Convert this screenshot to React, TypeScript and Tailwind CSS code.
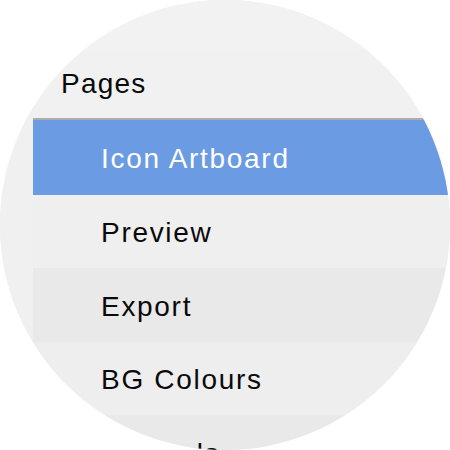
import React from "react";

const pages = [
  { name: "Icon Artboard", h: "h-[75px]", bg: "bg-[#6b9be2]", text: "text-white" },
  { name: "Preview", h: "h-[73px]", bg: "bg-[#efefef]", text: "text-[#0a0a0a]" },
  { name: "Export", h: "h-[74px]", bg: "bg-[#e9e9e9]", text: "text-[#0a0a0a]" },
  { name: "BG Colours", h: "h-[73px]", bg: "bg-[#eeeeee]", text: "text-[#0a0a0a]" },
  { name: "Symbols", h: "h-[74px]", bg: "bg-[#e9e9e9]", text: "text-[#0a0a0a]" },
];

export default function App() {
  return (
    <div className="w-[450px] h-[450px] bg-white">
      <div
        className="w-[450px] h-[450px] rounded-full overflow-hidden bg-[#f0f0f0] flex flex-col"
        style={{ fontFamily: '"Liberation Sans", Arial, sans-serif' }}
      >
        <div className="h-[50px] shrink-0 bg-[#f2f2f2]" />
        <div className="flex flex-1">
          <div className="w-[33px] shrink-0 bg-[#f0f0f0]" />
          <div className="flex-1 flex flex-col">
            <div className="h-[68px] shrink-0 bg-[#f1f1f1] pl-[28px] pt-[20px]">
              <p className="text-[28px] leading-none tracking-[1.2px] text-[#0a0a0a]">
                Pages
              </p>
            </div>
            <div className="h-[2px] shrink-0 bg-[#acacac]" />
            {pages.map((p) => (
              <div
                key={p.name}
                className={`${p.h} shrink-0 ${p.bg} flex items-center pl-[68px] pt-[3px]`}
              >
                <span className={`text-[28px] leading-none tracking-[1.7px] ${p.text}`}>
                  {p.name}
                </span>
              </div>
            ))}
          </div>
        </div>
      </div>
    </div>
  );
}
